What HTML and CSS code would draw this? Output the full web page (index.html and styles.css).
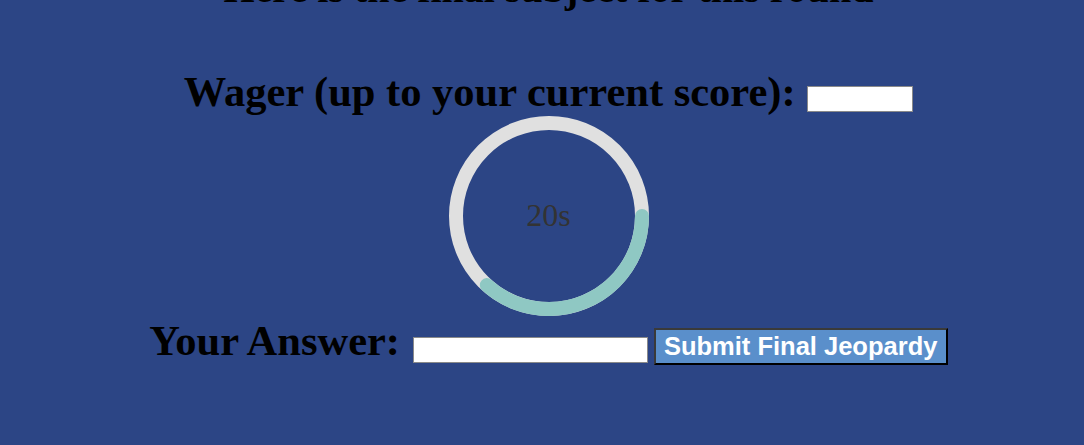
FILE: index.html
```html
<!DOCTYPE html>
<html lang="en">
<head>
<meta charset="utf-8">
<title>Final Jeopardy</title>
<link rel="stylesheet" href="styles.css">
</head>
<body>
<main class="page">
  <h1 class="category">Here is the final subject for this round</h1>
  <h2 class="row wager-row">Wager (up to your current score): <input class="wager-input" type="text"></h2>
  <div class="timer">
    <svg class="timer-ring" width="200" height="200" viewBox="0 0 200 200">
      <circle cx="100" cy="100" r="93" fill="none" stroke="#e0e0e0" stroke-width="14"/>
      <path d="M193 100 A93 93 0 0 1 37.8 169.1" fill="none" stroke="#8fc8c3" stroke-width="14" stroke-linecap="round"/>
    </svg>
    <span class="timer-text">20s</span>
  </div>
  <h2 class="row answer-row">Your Answer: <input class="answer-input" type="text"><button class="submit-btn" type="button">Submit Final Jeopardy</button></h2>
</main>
</body>
</html>
```

FILE: styles.css
```css
html, body {
  margin: 0;
  padding: 0;
  height: 100%;
  overflow: hidden;
}
body {
  background: #2c4585;
  font-family: "Liberation Serif", "Times New Roman", serif;
  color: #000;
}
.page {
  display: flex;
  flex-direction: column;
  align-items: center;
  padding-left: 13px;
}
.category {
  font-size: 40px;
  font-weight: bold;
  line-height: 46px;
  margin: -34.5px 0 0 0;
  white-space: nowrap;
}
.row {
  font-size: 42.5px;
  font-weight: bold;
  line-height: 46px;
  margin: 0;
  display: flex;
  align-items: baseline;
  white-space: pre;
}
.wager-row {
  margin-top: 57px;
}
.wager-input {
  width: 106px;
  height: 26px;
  box-sizing: border-box;
  border: 1px solid #8a8a8a;
  background: #fff;
  padding: 0 2px;
  font-size: 13px;
  margin: 0 0 0 1px;
  position: relative;
  top: -2px;
}
.timer {
  width: 200px;
  height: 200px;
  margin-top: 1px;
  display: flex;
  align-items: center;
  justify-content: center;
  position: relative;
}
.timer-ring {
  position: absolute;
  left: 0;
  top: 0;
}
.timer-text {
  position: relative;
  font-size: 32px;
  color: #333;
  font-family: "Liberation Serif", serif;
}
.answer-row {
  margin-top: 2px;
}
.answer-input {
  width: 235px;
  height: 26px;
  box-sizing: border-box;
  border: 1px solid #8a8a8a;
  background: #fff;
  font-size: 13px;
  margin-left: 2px;
}
.submit-btn {
  height: 37px;
  width: 294px;
  box-sizing: border-box;
  margin-left: 6px;
  background: #5a8fcb;
  color: #fff;
  border: 2px outset #3a3a3a;
  font-family: "Liberation Sans", Arial, sans-serif;
  font-weight: bold;
  font-size: 25.5px;
  padding: 0;
}
```
